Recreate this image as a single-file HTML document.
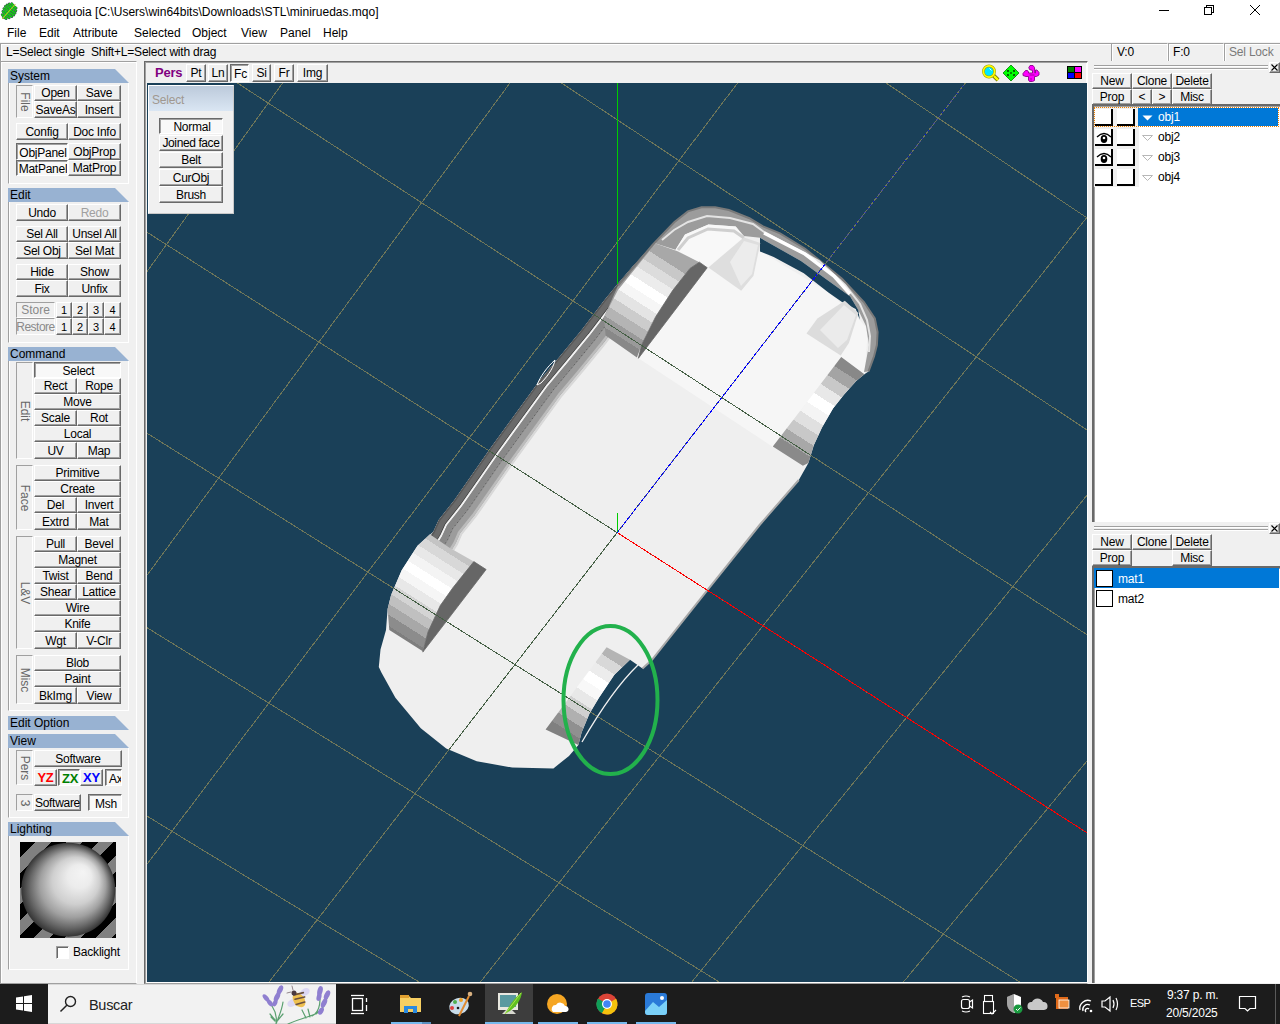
<!DOCTYPE html><html><head><meta charset="utf-8"><style>
*{margin:0;padding:0;box-sizing:border-box}
html,body{width:1280px;height:1024px;overflow:hidden;background:#f0f0f0;font-family:"Liberation Sans",sans-serif;font-size:12px;color:#000}
div{position:absolute}
.t{white-space:nowrap;line-height:1;letter-spacing:-0.2px}
.b,.bp{letter-spacing:-0.25px;background:#f0f0f0;border-top:1px solid #fff;border-left:1px solid #fff;border-right:1px solid #696969;border-bottom:1px solid #696969;box-shadow:inset -1px -1px 0 #a0a0a0;display:flex;align-items:center;justify-content:center;white-space:nowrap;font-size:12px;line-height:12px;overflow:hidden}
.bp{background:#f8f8f8;border-top:1px solid #696969;border-left:1px solid #696969;border-right:1px solid #fff;border-bottom:1px solid #fff;box-shadow:inset 1px 1px 0 #a0a0a0;padding:2px 0 0 2px}
.hd{width:122px;height:14px;background:#98b2d2;clip-path:polygon(0 0,107px 0,121px 14px,0 14px);font-size:12px;line-height:14px;padding-left:2px;white-space:nowrap}
.fr{border-left:1px solid #a0a0a0;border-right:1px solid #fff;border-bottom:1px solid #fff;box-shadow:inset 1px 0 0 #fff}
.vl{border-left:1px solid #a0a0a0;border-top:1px solid #a0a0a0;border-right:1px solid #fff;border-bottom:1px solid #fff;}
.vl span{position:absolute;left:50%;top:50%;transform:translate(-50%,-50%) rotate(90deg);color:#666;font-size:12px;white-space:nowrap;line-height:12px}
</style></head><body>
<div style="left:0px;top:0px;width:1280px;height:42px;background:#fff"></div>
<div class="t" style="left:23px;top:6px;font-size:12px;letter-spacing:0">Metasequoia [C:\Users\win64bits\Downloads\STL\miniruedas.mqo]</div>
<div class="t" style="left:7px;top:27px;font-size:12px;letter-spacing:0">File</div>
<div class="t" style="left:39px;top:27px;font-size:12px;letter-spacing:0">Edit</div>
<div class="t" style="left:73px;top:27px;font-size:12px;letter-spacing:0">Attribute</div>
<div class="t" style="left:134px;top:27px;font-size:12px;letter-spacing:0">Selected</div>
<div class="t" style="left:192px;top:27px;font-size:12px;letter-spacing:0">Object</div>
<div class="t" style="left:241px;top:27px;font-size:12px;letter-spacing:0">View</div>
<div class="t" style="left:280px;top:27px;font-size:12px;letter-spacing:0">Panel</div>
<div class="t" style="left:323px;top:27px;font-size:12px;letter-spacing:0">Help</div>
<svg style="position:absolute;left:0;top:0" width="1280" height="42"><g stroke="#000" stroke-width="1" fill="none" shape-rendering="crispEdges"><line x1="1159" y1="10.5" x2="1169" y2="10.5"/><rect x="1204.5" y="7.5" width="7" height="7"/><path d="M1206.5 7.5 V5.5 H1213.5 V12.5 H1211.5"/></g><g stroke="#000" stroke-width="1" fill="none"><line x1="1250" y1="5" x2="1260" y2="15"/><line x1="1260" y1="5" x2="1250" y2="15"/></g><g stroke-linecap="round"><g stroke="#3c4a50" stroke-width="2.6"><line x1="3.8" y1="17.1" x2="2.1" y2="14.6"/><line x1="3.8" y1="17.1" x2="6.2" y2="18.7"/><line x1="5.4" y1="15.3" x2="2.8" y2="11.4"/><line x1="5.4" y1="15.3" x2="9.3" y2="17.9"/><line x1="7.0" y1="13.5" x2="3.8" y2="8.6"/><line x1="7.0" y1="13.5" x2="11.8" y2="16.7"/><line x1="8.6" y1="11.6" x2="5.2" y2="6.4"/><line x1="8.6" y1="11.6" x2="13.9" y2="15.1"/><line x1="10.2" y1="9.8" x2="7.0" y2="4.9"/><line x1="10.2" y1="9.8" x2="15.2" y2="13.1"/><line x1="11.9" y1="8.0" x2="9.2" y2="3.9"/><line x1="11.9" y1="8.0" x2="15.9" y2="10.7"/><line x1="13.5" y1="6.2" x2="11.7" y2="3.5"/><line x1="13.5" y1="6.2" x2="16.2" y2="8.0"/></g><g stroke="#10d810" stroke-width="1.6"><line x1="3.8" y1="17.1" x2="2.1" y2="14.6"/><line x1="3.8" y1="17.1" x2="6.2" y2="18.7"/><line x1="5.4" y1="15.3" x2="2.8" y2="11.4"/><line x1="5.4" y1="15.3" x2="9.3" y2="17.9"/><line x1="7.0" y1="13.5" x2="3.8" y2="8.6"/><line x1="7.0" y1="13.5" x2="11.8" y2="16.7"/><line x1="8.6" y1="11.6" x2="5.2" y2="6.4"/><line x1="8.6" y1="11.6" x2="13.9" y2="15.1"/><line x1="10.2" y1="9.8" x2="7.0" y2="4.9"/><line x1="10.2" y1="9.8" x2="15.2" y2="13.1"/><line x1="11.9" y1="8.0" x2="9.2" y2="3.9"/><line x1="11.9" y1="8.0" x2="15.9" y2="10.7"/><line x1="13.5" y1="6.2" x2="11.7" y2="3.5"/><line x1="13.5" y1="6.2" x2="16.2" y2="8.0"/></g><line x1="2.5" y1="18.5" x2="15" y2="4.5" stroke="#b8d020" stroke-width="1.1"/></g></svg>
<div style="left:0px;top:42px;width:1280px;height:1px;background:#f4f4f4"></div>
<div style="left:0px;top:43px;width:1280px;height:18px;background:#f0f0f0;border-top:1px solid #a0a0a0;border-left:1px solid #a0a0a0;box-shadow:inset 1px 1px 0 #fff"></div>
<div class="t" style="left:6px;top:45.7px;font-size:12px">L=Select single&nbsp;&nbsp;Shift+L=Select with drag</div>
<div style="left:1111px;top:43px;width:57px;height:18px;border-left:1px solid #a0a0a0;border-top:1px solid #a0a0a0;border-right:1px solid #fff;box-shadow:inset 1px 1px 0 #fff"></div>
<div style="left:1168px;top:43px;width:56px;height:18px;border-left:1px solid #a0a0a0;border-top:1px solid #a0a0a0;border-right:1px solid #fff;box-shadow:inset 1px 1px 0 #fff"></div>
<div style="left:1224px;top:43px;width:57px;height:18px;border-left:1px solid #a0a0a0;border-top:1px solid #a0a0a0;border-right:1px solid #fff;box-shadow:inset 1px 1px 0 #fff"></div>
<div class="t" style="left:1117px;top:45.7px;">V:0</div>
<div class="t" style="left:1173px;top:45.7px;">F:0</div>
<div class="t" style="left:1229px;top:45.7px;color:#7a7a7a">Sel Lock</div>
<div style="left:0px;top:61px;width:137px;height:923px;border-left:1px solid #a0a0a0;border-top:1px solid #a0a0a0;border-right:1px solid #fff;border-bottom:1px solid #a0a0a0;box-shadow:inset 1px 1px 0 #fff"></div>
<div class="hd" style="left:8px;top:69px;">System</div>
<div class="fr" style="left:8px;top:83px;width:121px;height:101px;"></div>
<div class="vl" style="left:16px;top:85px;width:17px;height:33px;"><span>File</span></div>
<div class="b" style="left:34px;top:85px;width:43px;height:16px;color:#000;font-weight:normal;">Open</div>
<div class="b" style="left:77px;top:85px;width:44px;height:16px;color:#000;font-weight:normal;">Save</div>
<div class="b" style="left:34px;top:101px;width:43px;height:17px;color:#000;font-weight:normal;">SaveAs</div>
<div class="b" style="left:77px;top:101px;width:44px;height:17px;color:#000;font-weight:normal;">Insert</div>
<div class="b" style="left:16px;top:123px;width:52px;height:17px;color:#000;font-weight:normal;">Config</div>
<div class="b" style="left:68px;top:123px;width:53px;height:17px;color:#000;font-weight:normal;">Doc Info</div>
<div class="bp" style="left:16px;top:143px;width:52px;height:17px;color:#000;font-weight:normal;">ObjPanel</div>
<div class="b" style="left:68px;top:143px;width:53px;height:17px;color:#000;font-weight:normal;">ObjProp</div>
<div class="bp" style="left:16px;top:160px;width:52px;height:16px;color:#000;font-weight:normal;">MatPanel</div>
<div class="b" style="left:68px;top:160px;width:53px;height:16px;color:#000;font-weight:normal;">MatProp</div>
<div class="hd" style="left:8px;top:188px;">Edit</div>
<div class="fr" style="left:8px;top:202px;width:121px;height:141px;"></div>
<div class="b" style="left:16px;top:204px;width:52px;height:17px;color:#000;font-weight:normal;">Undo</div>
<div class="b" style="left:68px;top:204px;width:53px;height:17px;color:#a0a0a0;font-weight:normal;">Redo</div>
<div class="b" style="left:16px;top:226px;width:52px;height:16px;color:#000;font-weight:normal;">Sel All</div>
<div class="b" style="left:68px;top:226px;width:53px;height:16px;color:#000;font-weight:normal;">Unsel All</div>
<div class="b" style="left:16px;top:242px;width:52px;height:17px;color:#000;font-weight:normal;">Sel Obj</div>
<div class="b" style="left:68px;top:242px;width:53px;height:17px;color:#000;font-weight:normal;">Sel Mat</div>
<div class="b" style="left:16px;top:264px;width:52px;height:16px;color:#000;font-weight:normal;">Hide</div>
<div class="b" style="left:68px;top:264px;width:53px;height:16px;color:#000;font-weight:normal;">Show</div>
<div class="b" style="left:16px;top:280px;width:52px;height:17px;color:#000;font-weight:normal;">Fix</div>
<div class="b" style="left:68px;top:280px;width:53px;height:17px;color:#000;font-weight:normal;">Unfix</div>
<div style="left:16px;top:302px;width:39px;height:16px;border-left:1px solid #a0a0a0;border-top:1px solid #a0a0a0;border-right:1px solid #fff;border-bottom:1px solid #fff;color:#8a8a8a;display:flex;align-items:center;justify-content:center">Store</div>
<div style="left:16px;top:318px;width:39px;height:17px;border-left:1px solid #a0a0a0;border-top:1px solid #a0a0a0;border-right:1px solid #fff;border-bottom:1px solid #fff;color:#8a8a8a;display:flex;align-items:center;justify-content:center;letter-spacing:-0.5px">Restore</div>
<div class="b" style="left:56px;top:302px;width:16px;height:16px;color:#000;font-weight:normal;font-size:11px">1</div>
<div class="b" style="left:56px;top:318px;width:16px;height:17px;color:#000;font-weight:normal;font-size:11px">1</div>
<div class="b" style="left:72px;top:302px;width:16px;height:16px;color:#000;font-weight:normal;font-size:11px">2</div>
<div class="b" style="left:72px;top:318px;width:16px;height:17px;color:#000;font-weight:normal;font-size:11px">2</div>
<div class="b" style="left:88px;top:302px;width:16px;height:16px;color:#000;font-weight:normal;font-size:11px">3</div>
<div class="b" style="left:88px;top:318px;width:16px;height:17px;color:#000;font-weight:normal;font-size:11px">3</div>
<div class="b" style="left:104px;top:302px;width:17px;height:16px;color:#000;font-weight:normal;font-size:11px">4</div>
<div class="b" style="left:104px;top:318px;width:17px;height:17px;color:#000;font-weight:normal;font-size:11px">4</div>
<div class="hd" style="left:8px;top:347px;">Command</div>
<div class="fr" style="left:8px;top:361px;width:121px;height:350px;"></div>
<div class="vl" style="left:16px;top:362px;width:17px;height:97px;"><span>Edit</span></div>
<div class="bp" style="left:34px;top:362px;width:87px;height:16px;color:#000;font-weight:normal;">Select</div>
<div class="b" style="left:34px;top:378px;width:43px;height:16px;color:#000;font-weight:normal;">Rect</div>
<div class="b" style="left:77px;top:378px;width:44px;height:16px;color:#000;font-weight:normal;">Rope</div>
<div class="b" style="left:34px;top:394px;width:87px;height:16px;color:#000;font-weight:normal;">Move</div>
<div class="b" style="left:34px;top:410px;width:43px;height:16px;color:#000;font-weight:normal;">Scale</div>
<div class="b" style="left:77px;top:410px;width:44px;height:16px;color:#000;font-weight:normal;">Rot</div>
<div class="b" style="left:34px;top:426px;width:87px;height:16px;color:#000;font-weight:normal;">Local</div>
<div class="b" style="left:34px;top:442px;width:43px;height:17px;color:#000;font-weight:normal;">UV</div>
<div class="b" style="left:77px;top:442px;width:44px;height:17px;color:#000;font-weight:normal;">Map</div>
<div class="vl" style="left:16px;top:465px;width:17px;height:65px;"><span>Face</span></div>
<div class="b" style="left:34px;top:465px;width:87px;height:16px;color:#000;font-weight:normal;">Primitive</div>
<div class="b" style="left:34px;top:481px;width:87px;height:16px;color:#000;font-weight:normal;">Create</div>
<div class="b" style="left:34px;top:497px;width:43px;height:16px;color:#000;font-weight:normal;">Del</div>
<div class="b" style="left:77px;top:497px;width:44px;height:16px;color:#000;font-weight:normal;">Invert</div>
<div class="b" style="left:34px;top:513px;width:43px;height:17px;color:#000;font-weight:normal;">Extrd</div>
<div class="b" style="left:77px;top:513px;width:44px;height:17px;color:#000;font-weight:normal;">Mat</div>
<div class="vl" style="left:16px;top:536px;width:17px;height:113px;"><span>L&amp;V</span></div>
<div class="b" style="left:34px;top:536px;width:43px;height:16px;color:#000;font-weight:normal;">Pull</div>
<div class="b" style="left:77px;top:536px;width:44px;height:16px;color:#000;font-weight:normal;">Bevel</div>
<div class="b" style="left:34px;top:552px;width:87px;height:16px;color:#000;font-weight:normal;">Magnet</div>
<div class="b" style="left:34px;top:568px;width:43px;height:16px;color:#000;font-weight:normal;">Twist</div>
<div class="b" style="left:77px;top:568px;width:44px;height:16px;color:#000;font-weight:normal;">Bend</div>
<div class="b" style="left:34px;top:584px;width:43px;height:16px;color:#000;font-weight:normal;">Shear</div>
<div class="b" style="left:77px;top:584px;width:44px;height:16px;color:#000;font-weight:normal;">Lattice</div>
<div class="b" style="left:34px;top:600px;width:87px;height:16px;color:#000;font-weight:normal;">Wire</div>
<div class="b" style="left:34px;top:616px;width:87px;height:16px;color:#000;font-weight:normal;">Knife</div>
<div class="b" style="left:34px;top:632px;width:43px;height:17px;color:#000;font-weight:normal;">Wgt</div>
<div class="b" style="left:77px;top:632px;width:44px;height:17px;color:#000;font-weight:normal;">V-Clr</div>
<div class="vl" style="left:16px;top:655px;width:17px;height:49px;"><span>Misc</span></div>
<div class="b" style="left:34px;top:655px;width:87px;height:16px;color:#000;font-weight:normal;">Blob</div>
<div class="b" style="left:34px;top:671px;width:87px;height:16px;color:#000;font-weight:normal;">Paint</div>
<div class="b" style="left:34px;top:687px;width:43px;height:17px;color:#000;font-weight:normal;">BkImg</div>
<div class="b" style="left:77px;top:687px;width:44px;height:17px;color:#000;font-weight:normal;">View</div>
<div class="hd" style="left:8px;top:716px;">Edit Option</div>
<div class="hd" style="left:8px;top:734px;">View</div>
<div class="fr" style="left:8px;top:748px;width:121px;height:70px;"></div>
<div class="vl" style="left:16px;top:750px;width:17px;height:35px;"><span>Pers</span></div>
<div class="b" style="left:34px;top:750px;width:88px;height:17px;color:#000;font-weight:normal;">Software</div>
<div class="b" style="left:34px;top:769px;width:23px;height:17px;color:#ff0000;font-weight:bold;font-size:13px">YZ</div>
<div class="bp" style="left:58px;top:769px;width:22px;height:17px;color:#008000;font-weight:bold;font-size:13px">ZX</div>
<div class="b" style="left:80px;top:769px;width:23px;height:17px;color:#0000ff;font-weight:bold;font-size:13px">XY</div>
<div class="bp" style="left:105px;top:769px;width:17px;height:17px;color:#000;font-weight:normal;justify-content:flex-start;padding-left:3px">Ax</div>
<div class="vl" style="left:16px;top:794px;width:17px;height:17px;"><span>3</span></div>
<div class="b" style="left:34px;top:794px;width:47px;height:17px;color:#000;font-weight:normal;justify-content:flex-start;padding-left:0px;letter-spacing:-0.3px">Software</div>
<div class="bp" style="left:88px;top:794px;width:34px;height:17px;color:#000;font-weight:normal;">Msh</div>
<div class="hd" style="left:8px;top:822px;">Lighting</div>
<div class="fr" style="left:8px;top:836px;width:121px;height:134px;"></div>
<div style="left:20px;top:842px;width:96px;height:96px;overflow:hidden;background:repeating-linear-gradient(135deg,#000 0 11px,#808080 11px 22.1px)"><svg style="position:absolute;left:0;top:0" width="96" height="96"><defs><radialGradient id="sph" cx="50%" cy="50%" r="50%" fx="66%" fy="31%"><stop offset="0" stop-color="#f4f4f4"/><stop offset="0.25" stop-color="#ececec"/><stop offset="0.5" stop-color="#cfcfcf"/><stop offset="0.7" stop-color="#a0a0a0"/><stop offset="0.86" stop-color="#686868"/><stop offset="1" stop-color="#343434"/></radialGradient></defs><circle cx="48.3" cy="47.7" r="47" fill="url(#sph)"/></svg></div>
<div style="left:56px;top:946px;width:13px;height:13px;background:#fff;border-top:1px solid #a0a0a0;border-left:1px solid #a0a0a0;border-right:1px solid #fff;border-bottom:1px solid #fff;box-shadow:inset 1px 1px 0 #696969"></div>
<div class="t" style="left:73px;top:946px;">Backlight</div>
<div style="left:144px;top:61px;width:944px;height:923px;border-left:1px solid #696969;border-top:1px solid #696969;border-right:1px solid #fff;border-bottom:1px solid #a0a0a0;box-shadow:inset 1px 1px 0 #a0a0a0, inset -1px -1px 0 #fff;background:#f0f0f0"></div>
<div class="t" style="left:155px;top:66px;font-weight:bold;color:#800080;font-size:13px">Pers</div>
<div class="b" style="left:186px;top:64px;width:20px;height:18px;color:#000;font-weight:normal;">Pt</div>
<div class="b" style="left:208px;top:64px;width:20px;height:18px;color:#000;font-weight:normal;">Ln</div>
<div class="bp" style="left:230px;top:64px;width:19px;height:18px;color:#000;font-weight:normal;">Fc</div>
<div class="b" style="left:252px;top:64px;width:19px;height:18px;color:#000;font-weight:normal;">Si</div>
<div class="b" style="left:274px;top:64px;width:20px;height:18px;color:#000;font-weight:normal;">Fr</div>
<div class="b" style="left:297px;top:64px;width:31px;height:18px;color:#000;font-weight:normal;">Img</div>
<div style="left:1067px;top:66px;width:15px;height:13px;background:#000"><div style="left:1px;top:1px;width:6px;height:5px;background:#008000"></div><div style="left:8px;top:1px;width:6px;height:5px;background:#ff00ff"></div><div style="left:1px;top:7px;width:6px;height:5px;background:#0000ff"></div><div style="left:8px;top:7px;width:6px;height:5px;background:#ff0000"></div></div>
<svg style="position:absolute;left:980px;top:63px" width="64" height="20"><line x1="993" y1="75" x2="998" y2="80" transform="translate(-980,-63)" stroke="#7a7a00" stroke-width="4"/><line x1="993" y1="75" x2="998" y2="80" transform="translate(-980,-63)" stroke="#ffff00" stroke-width="2.4"/><circle cx="9" cy="8.5" r="5.6" fill="#00e8ff" stroke="#9a9a00" stroke-width="2.6"/><circle cx="9" cy="8.5" r="5.6" fill="none" stroke="#ffff00" stroke-width="1.6"/><line x1="9.5" y1="5.5" x2="11.5" y2="7.5" stroke="#e8ffff" stroke-width="1"/><polygon points="31,2 39,10 31,18 23,10" fill="#00ff00" stroke="#008000" stroke-width="0.8"/><g stroke="#006000" stroke-width="1" fill="none"><path d="M26.5 6.5 L28.5 8.5 M28.5 7 v1.5 h-1.5"/><path d="M35.5 6.5 L33.5 8.5 M33.5 7 v1.5 h1.5"/><path d="M26.5 13.5 L28.5 11.5 M28.5 13 v-1.5 h-1.5"/><path d="M35.5 13.5 L33.5 11.5 M33.5 13 v-1.5 h1.5"/></g><circle cx="31" cy="10" r="0.8" fill="#000"/><path d="M43 10.5 L45.5 7.5 L47.5 7.5 L48.5 9 L48.5 10 L52.5 10 L52.5 7.5 L49.5 6.5 L48.8 4.5 L50 2.5 L53 2.5 L54.5 4.5 L54.8 10 L55.5 10 L55.5 7 L57 7 L59 9.5 L59 12 L56.5 13.5 L54.5 13.5 L54.5 17.5 L52.5 18.5 L49.5 18.5 L48.5 17 L48.5 13.5 L46 13.5 L43 12.5 Z" fill="#ff00ff" stroke="#8a008a" stroke-width="0.9"/><path d="M51 15 v2.5 M49.5 12 h5" stroke="#8a008a" stroke-width="0.8"/></svg>
<svg style="position:absolute;left:147px;top:83px" width="940" height="899" viewBox="147 83 940 899"><rect x="147" y="83" width="940" height="899" fill="#1a4058"/><g stroke="#6e7659" stroke-width="1" fill="none" shape-rendering="crispEdges"><line x1="207.7" y1="-1608.6" x2="-1325.8" y2="840.4"/><line x1="382.7" y1="-1480.3" x2="-1170.2" y2="928.6"/><line x1="554.6" y1="-1354.2" x2="-1016.9" y2="1015.5"/><line x1="723.6" y1="-1230.3" x2="-865.7" y2="1101.2"/><line x1="889.7" y1="-1108.6" x2="-716.7" y2="1185.6"/><line x1="1053.0" y1="-988.9" x2="-569.8" y2="1268.9"/><line x1="1213.5" y1="-871.2" x2="-425.0" y2="1351.0"/><line x1="1371.4" y1="-755.4" x2="-282.1" y2="1431.9"/><line x1="1526.6" y1="-641.6" x2="-141.3" y2="1511.8"/><line x1="1679.4" y1="-529.6" x2="-2.3" y2="1590.5"/><line x1="1829.6" y1="-419.5" x2="134.7" y2="1668.2"/><line x1="1977.4" y1="-311.1" x2="269.9" y2="1744.8"/><line x1="2122.8" y1="-204.5" x2="403.3" y2="1820.4"/><line x1="2265.9" y1="-99.6" x2="534.9" y2="1895.0"/><line x1="2406.8" y1="3.7" x2="664.8" y2="1968.6"/><line x1="2545.5" y1="105.4" x2="792.9" y2="2041.3"/><line x1="2682.0" y1="205.5" x2="919.4" y2="2113.0"/><line x1="207.7" y1="-1608.6" x2="2682.0" y2="205.5"/><line x1="92.9" y1="-1425.4" x2="2552.8" y2="345.3"/><line x1="-18.8" y1="-1246.9" x2="2426.5" y2="482.0"/><line x1="-127.7" y1="-1072.9" x2="2303.1" y2="615.6"/><line x1="-233.9" y1="-903.4" x2="2182.4" y2="746.2"/><line x1="-337.4" y1="-738.1" x2="2064.4" y2="873.9"/><line x1="-438.3" y1="-576.9" x2="1948.9" y2="998.8"/><line x1="-536.8" y1="-419.6" x2="1836.0" y2="1121.0"/><line x1="-632.9" y1="-266.1" x2="1725.4" y2="1240.7"/><line x1="-726.7" y1="-116.3" x2="1617.2" y2="1357.8"/><line x1="-818.3" y1="30.0" x2="1511.3" y2="1472.4"/><line x1="-907.8" y1="172.9" x2="1407.5" y2="1584.7"/><line x1="-995.3" y1="312.6" x2="1305.9" y2="1694.7"/><line x1="-1080.7" y1="449.0" x2="1206.4" y2="1802.4"/><line x1="-1164.2" y1="582.4" x2="1108.8" y2="1908.0"/><line x1="-1245.9" y1="712.8" x2="1013.2" y2="2011.5"/><line x1="-1325.8" y1="840.4" x2="919.4" y2="2113.0"/></g><defs><clipPath id="carclip"><polygon points="701.5,207.3 715.2,207.3 728.9,210.0 749.4,218.2 763.0,226.4 780.0,233.3 805.1,248.7 842.0,278.8 863.9,302.0 874.8,318.4 877.6,332.1 876.9,345.0 874.0,356.4 868.5,371.4 864.4,374.2 856.2,381.0 843.9,394.7 833.0,408.4 822.0,427.5 813.8,445.3 808.4,463.0 798.8,480.0 760.0,524.5 708.4,588.9 670.0,637.2 651.8,660.0 642.5,668.4 630.0,659.8 614.4,674.7 598.8,698.0 589.4,713.8 581.6,732.5 578.4,745.0 569.0,756.0 553.4,768.4 512.2,767.6 476.7,761.2 446.2,748.5 420.8,728.2 395.4,697.8 381.4,672.4 378.8,667.0 380.5,649.5 386.0,630.0 387.6,609.0 391.1,595.0 401.7,570.3 417.5,545.7 433.3,531.7 438.6,520.0 454.4,500.0 490.0,448.8 540.0,380.0 560.0,356.2 582.0,329.4 604.5,300.0 617.6,283.9 632.8,266.3 653.9,243.5 674.2,222.3 687.9,211.4"/></clipPath><linearGradient id="wFL" gradientUnits="userSpaceOnUse" x1="655.6" y1="243.4" x2="597.496" y2="334.444"><stop offset="0.000" stop-color="#a8a8a8"/><stop offset="0.091" stop-color="#a8a8a8"/><stop offset="0.091" stop-color="#c8c8c8"/><stop offset="0.182" stop-color="#c8c8c8"/><stop offset="0.182" stop-color="#dcdcdc"/><stop offset="0.273" stop-color="#dcdcdc"/><stop offset="0.273" stop-color="#ececec"/><stop offset="0.364" stop-color="#ececec"/><stop offset="0.364" stop-color="#ffffff"/><stop offset="0.455" stop-color="#ffffff"/><stop offset="0.455" stop-color="#f6f6f6"/><stop offset="0.545" stop-color="#f6f6f6"/><stop offset="0.545" stop-color="#e4e4e4"/><stop offset="0.636" stop-color="#e4e4e4"/><stop offset="0.636" stop-color="#cccccc"/><stop offset="0.727" stop-color="#cccccc"/><stop offset="0.727" stop-color="#b4b4b4"/><stop offset="0.818" stop-color="#b4b4b4"/><stop offset="0.818" stop-color="#9a9a9a"/><stop offset="0.909" stop-color="#9a9a9a"/><stop offset="0.909" stop-color="#888888"/><stop offset="1.000" stop-color="#888888"/></linearGradient><linearGradient id="wRL" gradientUnits="userSpaceOnUse" x1="445" y1="540" x2="384.744" y2="634.4159999999999"><stop offset="0.000" stop-color="#c4c4c4"/><stop offset="0.083" stop-color="#c4c4c4"/><stop offset="0.083" stop-color="#d8d8d8"/><stop offset="0.167" stop-color="#d8d8d8"/><stop offset="0.167" stop-color="#e8e8e8"/><stop offset="0.250" stop-color="#e8e8e8"/><stop offset="0.250" stop-color="#f4f4f4"/><stop offset="0.333" stop-color="#f4f4f4"/><stop offset="0.333" stop-color="#ffffff"/><stop offset="0.417" stop-color="#ffffff"/><stop offset="0.417" stop-color="#f6f6f6"/><stop offset="0.500" stop-color="#f6f6f6"/><stop offset="0.500" stop-color="#e8e8e8"/><stop offset="0.583" stop-color="#e8e8e8"/><stop offset="0.583" stop-color="#d4d4d4"/><stop offset="0.667" stop-color="#d4d4d4"/><stop offset="0.667" stop-color="#c0c0c0"/><stop offset="0.750" stop-color="#c0c0c0"/><stop offset="0.750" stop-color="#a8a8a8"/><stop offset="0.833" stop-color="#a8a8a8"/><stop offset="0.833" stop-color="#8c8c8c"/><stop offset="0.917" stop-color="#8c8c8c"/><stop offset="0.917" stop-color="#7e7e7e"/><stop offset="1.000" stop-color="#7e7e7e"/></linearGradient><linearGradient id="wFR" gradientUnits="userSpaceOnUse" x1="852" y1="364" x2="791.744" y2="458.416"><stop offset="0.000" stop-color="#888888"/><stop offset="0.100" stop-color="#888888"/><stop offset="0.100" stop-color="#a4a4a4"/><stop offset="0.200" stop-color="#a4a4a4"/><stop offset="0.200" stop-color="#c8c8c8"/><stop offset="0.300" stop-color="#c8c8c8"/><stop offset="0.300" stop-color="#e8e8e8"/><stop offset="0.400" stop-color="#e8e8e8"/><stop offset="0.400" stop-color="#ffffff"/><stop offset="0.500" stop-color="#ffffff"/><stop offset="0.500" stop-color="#f4f4f4"/><stop offset="0.600" stop-color="#f4f4f4"/><stop offset="0.600" stop-color="#e0e0e0"/><stop offset="0.700" stop-color="#e0e0e0"/><stop offset="0.700" stop-color="#c8c8c8"/><stop offset="0.800" stop-color="#c8c8c8"/><stop offset="0.800" stop-color="#a8a8a8"/><stop offset="0.900" stop-color="#a8a8a8"/><stop offset="0.900" stop-color="#8a8a8a"/><stop offset="1.000" stop-color="#8a8a8a"/></linearGradient><linearGradient id="wRR" gradientUnits="userSpaceOnUse" x1="618" y1="652" x2="562.048" y2="739.672"><stop offset="0.000" stop-color="#b4b4b4"/><stop offset="0.100" stop-color="#b4b4b4"/><stop offset="0.100" stop-color="#d8d8d8"/><stop offset="0.200" stop-color="#d8d8d8"/><stop offset="0.200" stop-color="#ececec"/><stop offset="0.300" stop-color="#ececec"/><stop offset="0.300" stop-color="#ffffff"/><stop offset="0.400" stop-color="#ffffff"/><stop offset="0.400" stop-color="#f8f8f8"/><stop offset="0.500" stop-color="#f8f8f8"/><stop offset="0.500" stop-color="#e8e8e8"/><stop offset="0.600" stop-color="#e8e8e8"/><stop offset="0.600" stop-color="#d0d0d0"/><stop offset="0.700" stop-color="#d0d0d0"/><stop offset="0.700" stop-color="#b0b0b0"/><stop offset="0.800" stop-color="#b0b0b0"/><stop offset="0.800" stop-color="#909090"/><stop offset="0.900" stop-color="#909090"/><stop offset="0.900" stop-color="#808080"/><stop offset="1.000" stop-color="#808080"/></linearGradient><linearGradient id="rimL" gradientUnits="userSpaceOnUse" x1="514.5" y1="415" x2="533.7" y2="429.4"><stop offset="0" stop-color="#505050"/><stop offset="0.12" stop-color="#6a6a6a"/><stop offset="0.25" stop-color="#8a8a8a"/><stop offset="0.3" stop-color="#ececec"/><stop offset="0.36" stop-color="#7c7c7c"/><stop offset="0.5" stop-color="#9a9a9a"/><stop offset="0.65" stop-color="#b8b8b8"/><stop offset="0.8" stop-color="#d4d4d4"/><stop offset="1" stop-color="#e9e9e9"/></linearGradient></defs><polygon points="701.5,207.3 715.2,207.3 728.9,210.0 749.4,218.2 763.0,226.4 780.0,233.3 805.1,248.7 842.0,278.8 863.9,302.0 874.8,318.4 877.6,332.1 876.9,345.0 874.0,356.4 868.5,371.4 864.4,374.2 856.2,381.0 843.9,394.7 833.0,408.4 822.0,427.5 813.8,445.3 808.4,463.0 798.8,480.0 760.0,524.5 708.4,588.9 670.0,637.2 651.8,660.0 642.5,668.4 630.0,659.8 614.4,674.7 598.8,698.0 589.4,713.8 581.6,732.5 578.4,745.0 569.0,756.0 553.4,768.4 512.2,767.6 476.7,761.2 446.2,748.5 420.8,728.2 395.4,697.8 381.4,672.4 378.8,667.0 380.5,649.5 386.0,630.0 387.6,609.0 391.1,595.0 401.7,570.3 417.5,545.7 433.3,531.7 438.6,520.0 454.4,500.0 490.0,448.8 540.0,380.0 560.0,356.2 582.0,329.4 604.5,300.0 617.6,283.9 632.8,266.3 653.9,243.5 674.2,222.3 687.9,211.4" fill="#efefef"/><polygon points="638.4,358.3 700.0,262.0 760.0,251.0 828.0,292.0 858.0,318.0 868.0,330.0 864.4,374.2 841.2,357.1 773.0,447.0" fill="#f6f6f6"/><g clip-path="url(#carclip)"><polygon points="425.0,545.0 433.3,531.7 438.6,520.0 454.4,500.0 490.0,448.8 540.0,380.0 560.0,356.2 582.0,329.4 604.5,300.0 617.6,283.9 632.8,266.3 645.0,252.0 665.5,269.5 653.3,283.9 638.3,301.2 625.7,316.7 603.2,346.2 580.8,373.5 561.3,396.6 512.0,464.4 476.1,516.1 461.7,534.0 457.1,544.4 447.9,559.3" fill="#8a8a8a"/><polyline points="428.4,547.1 436.8,533.6 442.0,522.1 457.6,502.4 493.3,451.1 543.2,382.5 563.1,358.8 585.1,331.9 607.6,302.5 620.7,286.5 635.8,268.9 648.0,254.6" fill="none" stroke="#6a6a6a" stroke-width="8"/><polyline points="425.7,545.4 434.0,532.1 439.3,520.4 455.0,500.5 490.7,449.2 540.6,380.5 560.6,356.7 582.6,329.9 605.1,300.5 618.2,284.4 633.4,266.8 645.6,252.5" fill="none" stroke="#585858" stroke-width="1.6"/><polyline points="431.4,549.0 440.0,535.3 445.1,524.0 460.5,504.5 496.2,453.2 546.0,384.7 565.8,361.1 588.0,334.1 610.5,304.7 623.4,288.8 638.6,271.3 650.8,256.9" fill="none" stroke="#404040" stroke-width="0.9"/><polyline points="432.6,549.8 441.2,535.9 446.3,524.7 461.6,505.4 497.3,454.0 547.1,385.5 566.9,362.0 589.1,335.0 611.6,305.6 624.5,289.7 639.6,272.2 651.8,257.8" fill="none" stroke="#f2f2f2" stroke-width="2"/><polyline points="435.6,551.6 444.3,537.6 449.3,526.5 464.4,507.4 500.2,456.0 549.8,387.7 569.6,364.2 591.8,337.2 614.3,307.7 627.2,291.9 642.3,274.4 654.5,260.1" fill="none" stroke="#888888" stroke-width="5"/><polyline points="439.0,553.7 447.8,539.5 452.7,528.6 467.7,509.8 503.4,458.3 553.0,390.2 572.7,366.7 594.9,339.7 617.5,310.2 630.2,294.5 645.3,277.0 657.6,262.7" fill="none" stroke="#5a5a5a" stroke-width="1" stroke-dasharray="1.5 2.5"/><polyline points="442.0,555.6 450.9,541.1 455.7,530.4 470.5,511.9 506.3,460.3 555.8,392.3 575.4,369.0 597.7,341.8 620.2,312.4 632.9,296.7 648.0,279.3 660.2,265.0" fill="none" stroke="#9c9c9c" stroke-width="6"/><polyline points="445.4,557.7 454.5,543.0 459.1,532.5 473.7,514.3 509.6,462.7 558.9,394.8 578.5,371.5 600.8,344.3 623.3,314.9 636.0,299.3 651.0,281.9 663.3,267.6" fill="none" stroke="#bcbcbc" stroke-width="2.5"/><polyline points="447.5,559.0 456.7,544.2 461.2,533.8 475.7,515.8 511.6,464.1 560.9,396.3 580.4,373.1 602.8,345.9 625.3,316.4 637.9,300.9 652.9,283.6 665.2,269.2" fill="none" stroke="#d8d8d8" stroke-width="2.5"/></g><polygon points="604.0,317.0 618.1,285.6 652.5,245.0 674.2,222.3 687.9,211.4 701.5,207.3 715.2,207.3 728.9,210.0 749.4,218.2 763.0,226.4 780.0,233.3 805.1,248.7 842.0,278.8 863.9,302.0 874.8,318.4 877.6,332.1 876.9,345.0 874.0,356.4 868.5,371.4 864.0,372.0 869.0,345.0 866.0,326.0 858.4,310.2 850.2,296.6 825.6,278.8 801.0,261.0 760.0,237.8 744.0,236.0 735.7,226.4 708.4,224.4 685.0,234.6 675.5,249.7 655.6,243.4 622.0,300.0" fill="#9c9c9c"/><polyline points="618.1,285.6 652.5,245.0 674.2,222.3 687.9,211.4 701.5,207.3 715.2,207.3 728.9,210.0 749.4,218.2 763.0,226.4 780.0,233.3 805.1,248.7 842.0,278.8 863.9,302.0 874.8,318.4 877.6,332.1 876.9,345.0 874.0,356.4 868.5,371.4" fill="none" stroke="#7a7a7a" stroke-width="2"/><polyline points="662.0,240.0 674.0,230.0 688.0,222.0 707.0,216.0 730.0,218.0 753.0,224.0 764.0,232.0 819.0,261.0 845.0,285.0 860.0,304.0 867.0,320.0 870.0,336.0 869.0,352.0" fill="none" stroke="#e4e4e4" stroke-width="2"/><polyline points="764.0,233.0 805.0,254.0 834.0,276.0 850.0,294.0" fill="none" stroke="#ffffff" stroke-width="3.5"/><polygon points="675.5,249.7 685.0,234.6 708.4,224.4 735.7,226.4 744.0,237.0 708.4,267.5 700.0,263.0" fill="#f8f8f8"/><polyline points="678.0,250.0 688.0,238.0 708.0,229.0 734.0,231.0 744.0,238.0" fill="none" stroke="#cfcfcf" stroke-width="3"/><polygon points="760.0,237.8 801.0,261.0 825.6,278.8 850.2,296.6 858.4,310.2 859.8,319.8 855.7,308.9 842.0,302.0 828.4,292.5 803.8,273.3 773.7,256.9 760.0,251.4" fill="#1a4058"/><polygon points="708.4,267.5 744.0,237.4 760.3,242.9 753.5,275.7 741.2,290.7" fill="#dedede"/><polygon points="730.0,262.0 744.0,241.0 758.0,245.0 752.0,274.0 741.0,286.0" fill="#ececec"/><polygon points="806.5,333.5 817.4,318.4 844.8,300.7 858.4,313.0 848.9,343.0 840.7,355.4" fill="#dcdcdc"/><polygon points="820.0,330.0 844.0,305.0 856.0,315.0 847.0,340.0 838.0,348.0" fill="#ebebeb"/><polygon points="655.6,243.4 677.5,251.2 699.4,262.2 690.0,268.4 672.8,290.3 655.6,316.9 641.6,345.0 636.9,357.5 605.6,335.6 604.0,316.9 618.0,290.0" fill="url(#wFL)"/><polygon points="699.4,262.2 707.2,267.7 638.4,358.3 641.6,345.0 655.6,316.9 672.8,290.3 690.0,268.4" fill="#666666" stroke="#666666" stroke-width="0.8"/><polygon points="429.8,534.3 449.1,547.5 473.8,561.6 452.7,588.0 440.3,605.5 428.0,632.0 422.8,651.2 389.3,630.1 387.6,609.0 391.1,595.0 401.7,570.3 417.5,545.7" fill="url(#wRL)"/><polygon points="473.8,561.6 486.1,569.5 422.8,652.1 428.0,632.0 440.3,605.5 452.7,588.0" fill="#666666" stroke="#666666" stroke-width="0.8"/><polygon points="841.2,357.1 864.4,374.2 856.2,381.0 843.9,394.7 833.0,408.4 822.0,427.5 813.8,445.3 808.4,463.0 802.9,465.8 772.8,446.6 804.3,405.6" fill="url(#wFR)"/><polygon points="606.6,647.3 630.0,659.8 614.4,674.7 598.8,698.0 589.4,713.8 581.6,732.5 578.4,745.0 545.6,729.4" fill="url(#wRR)"/><polyline points="798.8,480.0 760.0,524.5 708.4,588.9 670.0,637.2 651.8,660.0 642.5,668.4" fill="none" stroke="#a8a8a8" stroke-width="2"/><path d="M638 665 Q612 690 582 742" fill="none" stroke="#f0f0f0" stroke-width="1.3"/><path d="M537 385 C540 377 547 367 555 360 C554 366 549 375 541 383 Z" fill="none" stroke="#ffffff" stroke-width="1"/><g clip-path="url(#carclip)" stroke="#466046" stroke-width="1" fill="none" shape-rendering="crispEdges"><line x1="207.7" y1="-1608.6" x2="-1325.8" y2="840.4"/><line x1="382.7" y1="-1480.3" x2="-1170.2" y2="928.6"/><line x1="554.6" y1="-1354.2" x2="-1016.9" y2="1015.5"/><line x1="723.6" y1="-1230.3" x2="-865.7" y2="1101.2"/><line x1="889.7" y1="-1108.6" x2="-716.7" y2="1185.6"/><line x1="1053.0" y1="-988.9" x2="-569.8" y2="1268.9"/><line x1="1213.5" y1="-871.2" x2="-425.0" y2="1351.0"/><line x1="1371.4" y1="-755.4" x2="-282.1" y2="1431.9"/><line x1="1526.6" y1="-641.6" x2="-141.3" y2="1511.8"/><line x1="1679.4" y1="-529.6" x2="-2.3" y2="1590.5"/><line x1="1829.6" y1="-419.5" x2="134.7" y2="1668.2"/><line x1="1977.4" y1="-311.1" x2="269.9" y2="1744.8"/><line x1="2122.8" y1="-204.5" x2="403.3" y2="1820.4"/><line x1="2265.9" y1="-99.6" x2="534.9" y2="1895.0"/><line x1="2406.8" y1="3.7" x2="664.8" y2="1968.6"/><line x1="2545.5" y1="105.4" x2="792.9" y2="2041.3"/><line x1="2682.0" y1="205.5" x2="919.4" y2="2113.0"/><line x1="207.7" y1="-1608.6" x2="2682.0" y2="205.5"/><line x1="92.9" y1="-1425.4" x2="2552.8" y2="345.3"/><line x1="-18.8" y1="-1246.9" x2="2426.5" y2="482.0"/><line x1="-127.7" y1="-1072.9" x2="2303.1" y2="615.6"/><line x1="-233.9" y1="-903.4" x2="2182.4" y2="746.2"/><line x1="-337.4" y1="-738.1" x2="2064.4" y2="873.9"/><line x1="-438.3" y1="-576.9" x2="1948.9" y2="998.8"/><line x1="-536.8" y1="-419.6" x2="1836.0" y2="1121.0"/><line x1="-632.9" y1="-266.1" x2="1725.4" y2="1240.7"/><line x1="-726.7" y1="-116.3" x2="1617.2" y2="1357.8"/><line x1="-818.3" y1="30.0" x2="1511.3" y2="1472.4"/><line x1="-907.8" y1="172.9" x2="1407.5" y2="1584.7"/><line x1="-995.3" y1="312.6" x2="1305.9" y2="1694.7"/><line x1="-1080.7" y1="449.0" x2="1206.4" y2="1802.4"/><line x1="-1164.2" y1="582.4" x2="1108.8" y2="1908.0"/><line x1="-1245.9" y1="712.8" x2="1013.2" y2="2011.5"/><line x1="-1325.8" y1="840.4" x2="919.4" y2="2113.0"/></g><line x1="617.2" y1="532.6" x2="1173.6" y2="888.1" stroke="#ff0000" stroke-width="1" shape-rendering="crispEdges"/><g clip-path="url(#carclip)"><line x1="617.2" y1="532.6" x2="1007.4" y2="28.7" stroke="#5a6070" stroke-width="1" shape-rendering="crispEdges"/><line x1="617.2" y1="532.6" x2="1007.4" y2="28.7" stroke="#0000ff" stroke-width="1" stroke-dasharray="2.5 1.5" shape-rendering="crispEdges"/></g><line x1="617.2" y1="532.6" x2="1007.4" y2="28.7" stroke="#0000ff" stroke-width="1" stroke-dasharray="1.2 3.5"/><line x1="617.5" y1="83" x2="617.5" y2="284" stroke="#00cc00" stroke-width="1"/><line x1="617.5" y1="513" x2="617.5" y2="532" stroke="#00cc00" stroke-width="1"/><ellipse cx="610.5" cy="700" rx="47" ry="74" fill="none" stroke="#22b14c" stroke-width="4"/></svg>
<div style="left:148px;top:85px;width:86px;height:129px;background:#f0f0f0;border:1px solid #fff;border-right:1px solid #c8c8c8;border-bottom:1px solid #c8c8c8"><div style="left:0;top:0;width:84px;height:25px;background:linear-gradient(#bccadb,#dae6f3)"></div><div class="t" style="left:3px;top:8px;color:#a09890;font-size:12px">Select</div></div>
<div class="bp" style="left:159px;top:118px;width:64px;height:16px;color:#000;font-weight:normal;">Normal</div>
<div class="b" style="left:159px;top:135px;width:64px;height:16px;color:#000;font-weight:normal;letter-spacing:-0.4px">Joined face</div>
<div class="b" style="left:159px;top:152px;width:64px;height:16px;color:#000;font-weight:normal;">Belt</div>
<div class="b" style="left:159px;top:169px;width:64px;height:17px;color:#000;font-weight:normal;">CurObj</div>
<div class="b" style="left:159px;top:186px;width:64px;height:17px;color:#000;font-weight:normal;">Brush</div>
<div style="left:1094px;top:65px;width:174px;height:2px;border-top:1px solid #a0a0a0;border-bottom:1px solid #fff"></div>
<div style="left:1094px;top:68px;width:174px;height:2px;border-top:1px solid #a0a0a0;border-bottom:1px solid #fff"></div>
<div class="b" style="left:1269px;top:62px;width:11px;height:11px;"></div><svg style="position:absolute;left:1269px;top:62px" width="11" height="11"><path d="M2.5 2.5 L8.5 8.5 M8.5 2.5 L2.5 8.5" stroke="#000" stroke-width="1.1"/></svg>
<div class="b" style="left:1092px;top:73px;width:40px;height:16px;color:#000;font-weight:normal;">New</div>
<div class="b" style="left:1132px;top:73px;width:40px;height:16px;color:#000;font-weight:normal;">Clone</div>
<div class="b" style="left:1172px;top:73px;width:40px;height:16px;color:#000;font-weight:normal;">Delete</div>
<div class="b" style="left:1092px;top:89px;width:40px;height:16px;color:#000;font-weight:normal;">Prop</div>
<div class="b" style="left:1132px;top:89px;width:20px;height:16px;color:#000;font-weight:normal;">&lt;</div>
<div class="b" style="left:1152px;top:89px;width:20px;height:16px;color:#000;font-weight:normal;">&gt;</div>
<div class="b" style="left:1172px;top:89px;width:40px;height:16px;color:#000;font-weight:normal;">Misc</div>
<div style="left:1092px;top:104px;width:188px;height:418px;background:#fff;border-top:2px solid #696969;border-left:2px solid #696969;box-shadow:inset 1px 1px 0 #a0a0a0"></div>
<div style="left:1094px;top:107px;width:45px;height:20px;background:#f0f0f0"></div>
<div style="left:1095px;top:109px;width:18px;height:17px;background:#fff;border-right:2px solid #000;border-bottom:2px solid #000"></div>
<div style="left:1117px;top:109px;width:18px;height:17px;background:#fff;border-right:2px solid #000;border-bottom:2px solid #000"></div>
<div style="left:1138px;top:108px;width:140px;height:18px;background:#0078d7"></div>
<svg style="position:absolute;left:1142px;top:115px" width="11" height="6"><polygon points="0.5,0.5 10.5,0.5 5.5,5.5" fill="#fff"/></svg>
<div class="t" style="left:1158px;top:111px;color:#fff">obj1</div>
<div style="left:1094px;top:127px;width:45px;height:20px;background:#f0f0f0"></div>
<div style="left:1095px;top:129px;width:18px;height:17px;background:#fff;border-right:2px solid #000;border-bottom:2px solid #000"></div>
<div style="left:1117px;top:129px;width:18px;height:17px;background:#fff;border-right:2px solid #000;border-bottom:2px solid #000"></div>
<svg style="position:absolute;left:1096px;top:131px" width="16" height="14"><path d="M1 6 Q8 -1 15 6" fill="none" stroke="#000" stroke-width="1.3"/><ellipse cx="8" cy="8" rx="3.3" ry="4" fill="#000"/><circle cx="8" cy="7" r="1.3" fill="#fff"/></svg>
<svg style="position:absolute;left:1142px;top:135px" width="11" height="6"><polygon points="0.5,0.5 10.5,0.5 5.5,5.5" fill="none" stroke="#b8b8b8" stroke-width="1"/></svg>
<div class="t" style="left:1158px;top:131px;">obj2</div>
<div style="left:1094px;top:147px;width:45px;height:20px;background:#f0f0f0"></div>
<div style="left:1095px;top:149px;width:18px;height:17px;background:#fff;border-right:2px solid #000;border-bottom:2px solid #000"></div>
<div style="left:1117px;top:149px;width:18px;height:17px;background:#fff;border-right:2px solid #000;border-bottom:2px solid #000"></div>
<svg style="position:absolute;left:1096px;top:151px" width="16" height="14"><path d="M1 6 Q8 -1 15 6" fill="none" stroke="#000" stroke-width="1.3"/><ellipse cx="8" cy="8" rx="3.3" ry="4" fill="#000"/><circle cx="8" cy="7" r="1.3" fill="#fff"/></svg>
<svg style="position:absolute;left:1142px;top:155px" width="11" height="6"><polygon points="0.5,0.5 10.5,0.5 5.5,5.5" fill="none" stroke="#b8b8b8" stroke-width="1"/></svg>
<div class="t" style="left:1158px;top:151px;">obj3</div>
<div style="left:1094px;top:167px;width:45px;height:20px;background:#f0f0f0"></div>
<div style="left:1095px;top:169px;width:18px;height:17px;background:#fff;border-right:2px solid #000;border-bottom:2px solid #000"></div>
<div style="left:1117px;top:169px;width:18px;height:17px;background:#fff;border-right:2px solid #000;border-bottom:2px solid #000"></div>
<svg style="position:absolute;left:1142px;top:175px" width="11" height="6"><polygon points="0.5,0.5 10.5,0.5 5.5,5.5" fill="none" stroke="#b8b8b8" stroke-width="1"/></svg>
<div class="t" style="left:1158px;top:171px;">obj4</div>
<div style="left:1094px;top:107px;width:185px;height:20px;border:1px dotted #f08000"></div>
<div style="left:1094px;top:526px;width:174px;height:2px;border-top:1px solid #a0a0a0;border-bottom:1px solid #fff"></div>
<div style="left:1094px;top:529px;width:174px;height:2px;border-top:1px solid #a0a0a0;border-bottom:1px solid #fff"></div>
<div class="b" style="left:1269px;top:523px;width:11px;height:11px;"></div><svg style="position:absolute;left:1269px;top:523px" width="11" height="11"><path d="M2.5 2.5 L8.5 8.5 M8.5 2.5 L2.5 8.5" stroke="#000" stroke-width="1.1"/></svg>
<div class="b" style="left:1092px;top:534px;width:40px;height:16px;color:#000;font-weight:normal;">New</div>
<div class="b" style="left:1132px;top:534px;width:40px;height:16px;color:#000;font-weight:normal;">Clone</div>
<div class="b" style="left:1172px;top:534px;width:40px;height:16px;color:#000;font-weight:normal;">Delete</div>
<div class="b" style="left:1092px;top:550px;width:40px;height:16px;color:#000;font-weight:normal;">Prop</div>
<div class="b" style="left:1172px;top:550px;width:40px;height:16px;color:#000;font-weight:normal;">Misc</div>
<div style="left:1092px;top:566px;width:188px;height:417px;background:#fff;border-top:2px solid #696969;border-left:2px solid #696969;box-shadow:inset 1px 1px 0 #a0a0a0"></div>
<div style="left:1094px;top:568px;width:185px;height:20px;background:#0078d7"></div>
<div style="left:1096px;top:570px;width:17px;height:17px;background:#fff;border:1.5px solid #000"></div>
<div class="t" style="left:1118px;top:573px;color:#fff">mat1</div>
<div style="left:1096px;top:590px;width:17px;height:17px;background:#fff;border:1.5px solid #000"></div>
<div class="t" style="left:1118px;top:593px;color:#000">mat2</div>
<div style="left:0;top:984px;width:1280px;height:40px;background:#1c1c1c"></div>
<div style="left:48px;top:984px;width:288px;height:40px;background:#f2f2f2;border-top:1px solid #d8d8d8;border-bottom:1px solid #d8d8d8"></div>
<svg style="position:absolute;left:0;top:984px" width="1280" height="40"><polygon points="16,13.5 23,12.5 23,19 16,19" fill="#fff"/><polygon points="24,12.3 32,11 32,19 24,19" fill="#fff"/><polygon points="16,20 23,20 23,26.5 16,25.5" fill="#fff"/><polygon points="24,20 32,20 32,28 24,26.8" fill="#fff"/><circle cx="70.5" cy="17.5" r="5" fill="none" stroke="#222" stroke-width="1.4"/><line x1="66.8" y1="21.2" x2="60.5" y2="27.5" stroke="#222" stroke-width="1.5"/><g stroke-linecap="round"><path d="M276 40 C277 34 276 28 272 22 M276 40 C279 32 282 26 283 18 M270 30 l5 6 M283 30 l-5 6 M271 33 l4 4" stroke="#5aa070" stroke-width="1.2" fill="none"/><path d="M288 40 C296 36 306 34 315 30 C319 26 320 20 320 15 M316 30 C322 26 325 22 327 14 M306 34 l-4 -8 M310 33 l-2 -8 M312 32 l6 -4" stroke="#5aa070" stroke-width="1.2" fill="none"/><g fill="#8f7fd0"><ellipse cx="266" cy="14" rx="2.2" ry="4.5" transform="rotate(-40 266 14)"/><ellipse cx="270" cy="19" rx="2.2" ry="4" transform="rotate(-40 270 19)"/><ellipse cx="280" cy="6" rx="2.6" ry="5" transform="rotate(25 280 6)"/><ellipse cx="277" cy="13" rx="2.6" ry="5" transform="rotate(25 277 13)"/><ellipse cx="275" cy="19" rx="2.2" ry="3.5" transform="rotate(25 275 19)"/><ellipse cx="320" cy="7" rx="2.6" ry="5" transform="rotate(15 320 7)"/><ellipse cx="319" cy="13" rx="2.4" ry="4" transform="rotate(15 319 13)"/><ellipse cx="327" cy="11" rx="2.6" ry="5" transform="rotate(25 327 11)"/><ellipse cx="324" cy="19" rx="2.6" ry="5" transform="rotate(25 324 19)"/><ellipse cx="321" cy="27" rx="2.4" ry="4" transform="rotate(30 321 27)"/></g><ellipse cx="305" cy="8" rx="5" ry="3.5" fill="#dcd8f4" transform="rotate(-30 305 8)"/><ellipse cx="292" cy="19" rx="5" ry="3.5" fill="#dcd8f4" transform="rotate(-30 292 19)"/><ellipse cx="299" cy="16" rx="5.5" ry="8" fill="#eec050" transform="rotate(-35 299 16)"/><path d="M293 12 l9 -4 M295 16 l9 -4 M297 21 l8 -4" stroke="#6a5040" stroke-width="1.6" transform="rotate(10 299 16)"/><circle cx="294" cy="9" r="2.5" fill="#4a3a40"/><path d="M293 6 l-1 -4 M291 8 l-4 1" stroke="#7a6a70" stroke-width="0.8"/></g><g stroke="#fff" stroke-width="1.3" fill="none"><rect x="352.5" y="14.5" width="10" height="12"/><line x1="351" y1="11.5" x2="364" y2="11.5"/><line x1="351" y1="29.5" x2="364" y2="29.5"/><line x1="366.5" y1="14" x2="366.5" y2="18"/><line x1="366.5" y1="21" x2="366.5" y2="27"/></g><polygon points="400,12 409,12 411,14 421,14 421,28 400,28" fill="#f7cf62"/><rect x="400" y="11" width="9" height="3" fill="#e0a030"/><path d="M404 29 v-7 h13 v7 h-4 v-4 h-5 v4z" fill="#2a8ae0"/><rect x="391" y="38" width="31" height="2" fill="#76b9ed"/><rect x="422" y="38" width="9" height="2" fill="#5a8fbf"/><ellipse cx="459" cy="22" rx="10" ry="8" fill="#c8dcea" transform="rotate(-20 459 22)"/><circle cx="452" cy="24" r="2" fill="#e04040"/><circle cx="455" cy="18" r="2" fill="#50b050"/><circle cx="461" cy="16" r="2" fill="#f0a020"/><circle cx="458" cy="24" r="1.3" fill="#1c1c1c"/><line x1="459" y1="32" x2="469" y2="12" stroke="#e08a30" stroke-width="2"/><circle cx="470" cy="10" r="2.3" fill="#d8b080"/><rect x="485" y="0" width="48" height="40" fill="#3d3d3d"/><rect x="485" y="38" width="48" height="2" fill="#76b9ed"/><rect x="498" y="9" width="20" height="17" fill="#e8e8e0"/><rect x="500" y="11" width="16" height="12" fill="#5a9aa0"/><polygon points="502,30 516,30 512,26 506,26" fill="#d8d8d0"/><path d="M505 30 C510 20 516 12 522 8 C521 16 516 24 505 30Z" fill="#60c020"/><path d="M505 30 L521 9" stroke="#a8e050" stroke-width="1"/><circle cx="557" cy="20" r="10" fill="#f5a623"/><path d="M553 28 a4 4 0 0 1 3-7 a5 5 0 0 1 9 1 a3 3 0 0 1 1 6z" fill="#fff"/><rect x="538" y="38" width="40" height="2" fill="#76b9ed"/><circle cx="607" cy="20" r="10.5" fill="#db4437"/><path d="M607 20 L616.1 14.75 A10.5 10.5 0 0 1 601.75 29.1Z" fill="#f4c20d"/><path d="M607 20 L601.75 29.1 A10.5 10.5 0 0 1 597.9 14.75Z" fill="#0f9d58"/><path d="M597.9 14.75 L607 20 L601.75 29.1 A10.5 10.5 0 0 1 596.5 20 Z" fill="#0f9d58"/><circle cx="607" cy="20" r="5" fill="#fff"/><circle cx="607" cy="20" r="3.8" fill="#4285f4"/><rect x="587" y="38" width="40" height="2" fill="#76b9ed"/><rect x="645" y="9" width="22" height="22" rx="3" fill="#2a7ad8"/><path d="M645 27 l8-9 l6 5 l8-7 v12 a3 3 0 0 1 -3 3 h-16 a3 3 0 0 1 -3-3z" fill="#7ad0f8"/><circle cx="662" cy="14" r="2" fill="#fff"/><rect x="636" y="38" width="40" height="2" fill="#76b9ed"/><g stroke="#fff" stroke-width="1.2" fill="none"><rect x="961.5" y="15.5" width="8" height="9" rx="2"/><path d="M969.5 18 l3-2 v8 l-3-2"/><path d="M962 13 q4-2 8 0 M962 27 q4 2 8 0"/></g><g stroke="#fff" stroke-width="1.1" fill="none"><rect x="984.5" y="11.5" width="8" height="6"/><rect x="983.5" y="17.5" width="10" height="12"/><path d="M990 28 l2 2 l4-4"/></g><path d="M1007 13 l7-3 l7 3 v6 c0 6 -4 9 -7 10 c-3-1 -7-4 -7-10z" fill="#fff"/><path d="M1014 10 v19 c-3-1 -7-4 -7-10 v-6z" fill="#1c1c1c" opacity="0.4"/><circle cx="1018" cy="25" r="4.5" fill="#1a9a40"/><path d="M1016 25 l1.5 1.5 l3-3" stroke="#fff" stroke-width="1" fill="none"/><path d="M1031 26 a4 4 0 0 1 1-8 a6 6 0 0 1 11 0 a4 4 0 0 1 1 8z" fill="#c8c8c8"/><rect x="1056" y="13" width="12" height="12" fill="#e06a1a"/><rect x="1059" y="16" width="10" height="8" fill="#f09040" stroke="#fff" stroke-width="0.8"/><rect x="1055" y="10" width="4" height="4" fill="#e06a1a"/><g stroke="#fff" stroke-width="1.3" fill="none"><path d="M1080 26 a8 8 0 0 1 11 -9"/><path d="M1083 27 a5 5 0 0 1 7 -6"/><path d="M1086 28 a2 2 0 0 1 3 -3"/></g><circle cx="1091" cy="27" r="1.3" fill="#fff"/><g stroke="#fff" stroke-width="1.2" fill="none"><path d="M1102 17 h3 l5-4 v14 l-5-4 h-3z"/><path d="M1113 16 q2 4 0 8"/><path d="M1116 14 q3 6 0 12"/></g><path d="M1239.5 12.5 h16 v12 h-5.5 l-2.5 2.5 l-2.5 -2.5 h-5.5z" fill="none" stroke="#fff" stroke-width="1.2"/><line x1="1275.5" y1="0" x2="1275.5" y2="40" stroke="#5a5a5a"/></svg>
<div class="t" style="left:89px;top:998px;font-size:14.5px;color:#222;letter-spacing:-0.3px">Buscar</div>
<div class="t" style="left:1130px;top:998px;font-size:11px;color:#fff;letter-spacing:-0.6px">ESP</div>
<div class="t" style="left:1167px;top:989px;font-size:12px;color:#fff">9:37 p. m.</div>
<div class="t" style="left:1166px;top:1007px;font-size:12px;color:#fff">20/5/2025</div>
</body></html>
